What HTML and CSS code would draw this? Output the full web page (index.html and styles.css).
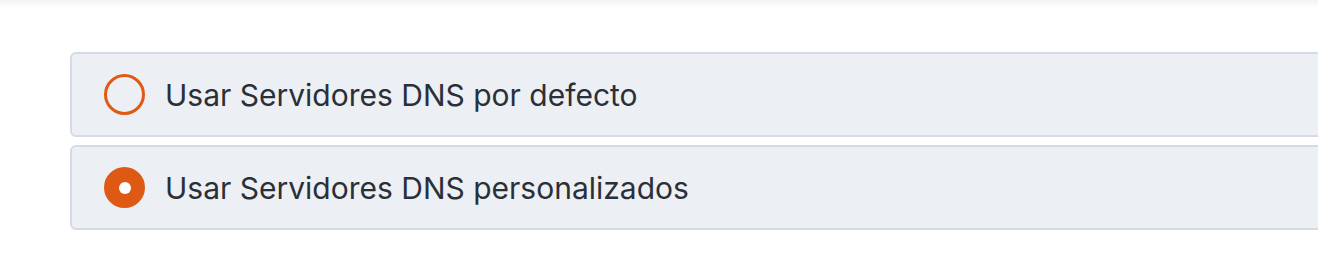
FILE: index.html
```html
<!DOCTYPE html>
<html lang="es">
<head>
<meta charset="utf-8">
<title>DNS</title>
<link rel="stylesheet" href="styles.css">
</head>
<body>
<div class="topbar"></div>
<div class="options">
  <label class="option">
    <span class="radio"></span>
    <span class="label">Usar Servidores DNS por defecto</span>
  </label>
  <label class="option">
    <span class="radio checked"></span>
    <span class="label">Usar Servidores DNS personalizados</span>
  </label>
</div>
</body>
</html>
```
FILE: styles.css
```css
html, body {
  margin: 0;
  padding: 0;
  background: #ffffff;
  overflow: hidden;
}
body {
  font-family: Inter, "Liberation Sans", Arial, sans-serif;
  width: 1318px;
  height: 268px;
}
.topbar {
  height: 8px;
  background: linear-gradient(#f4f4f5, #ffffff);
}
.options {
  display: flex;
  flex-direction: column;
  gap: 8px;
  padding-top: 44px;
  padding-left: 70px;
  margin-right: -20px;
}
.option {
  box-sizing: border-box;
  height: 85px;
  display: flex;
  align-items: center;
  gap: 20px;
  padding-left: 32px;
  background: #eceff4;
  border: 2px solid #d4dbe4;
  border-radius: 6px;
}
.radio {
  box-sizing: border-box;
  width: 41px;
  height: 41px;
  border-radius: 50%;
  border: 3px solid #e05a14;
  flex: none;
  position: relative;
}
.radio.checked {
  background: #de5a14;
  border-color: #de5a14;
}
.radio.checked::after {
  content: "";
  position: absolute;
  left: 50%;
  top: 50%;
  width: 12px;
  height: 12px;
  margin: -6px 0 0 -6px;
  border-radius: 50%;
  background: #ffffff;
}
.label {
  font-size: 30px;
  color: #2b2f38;
  line-height: 1;
}
```
